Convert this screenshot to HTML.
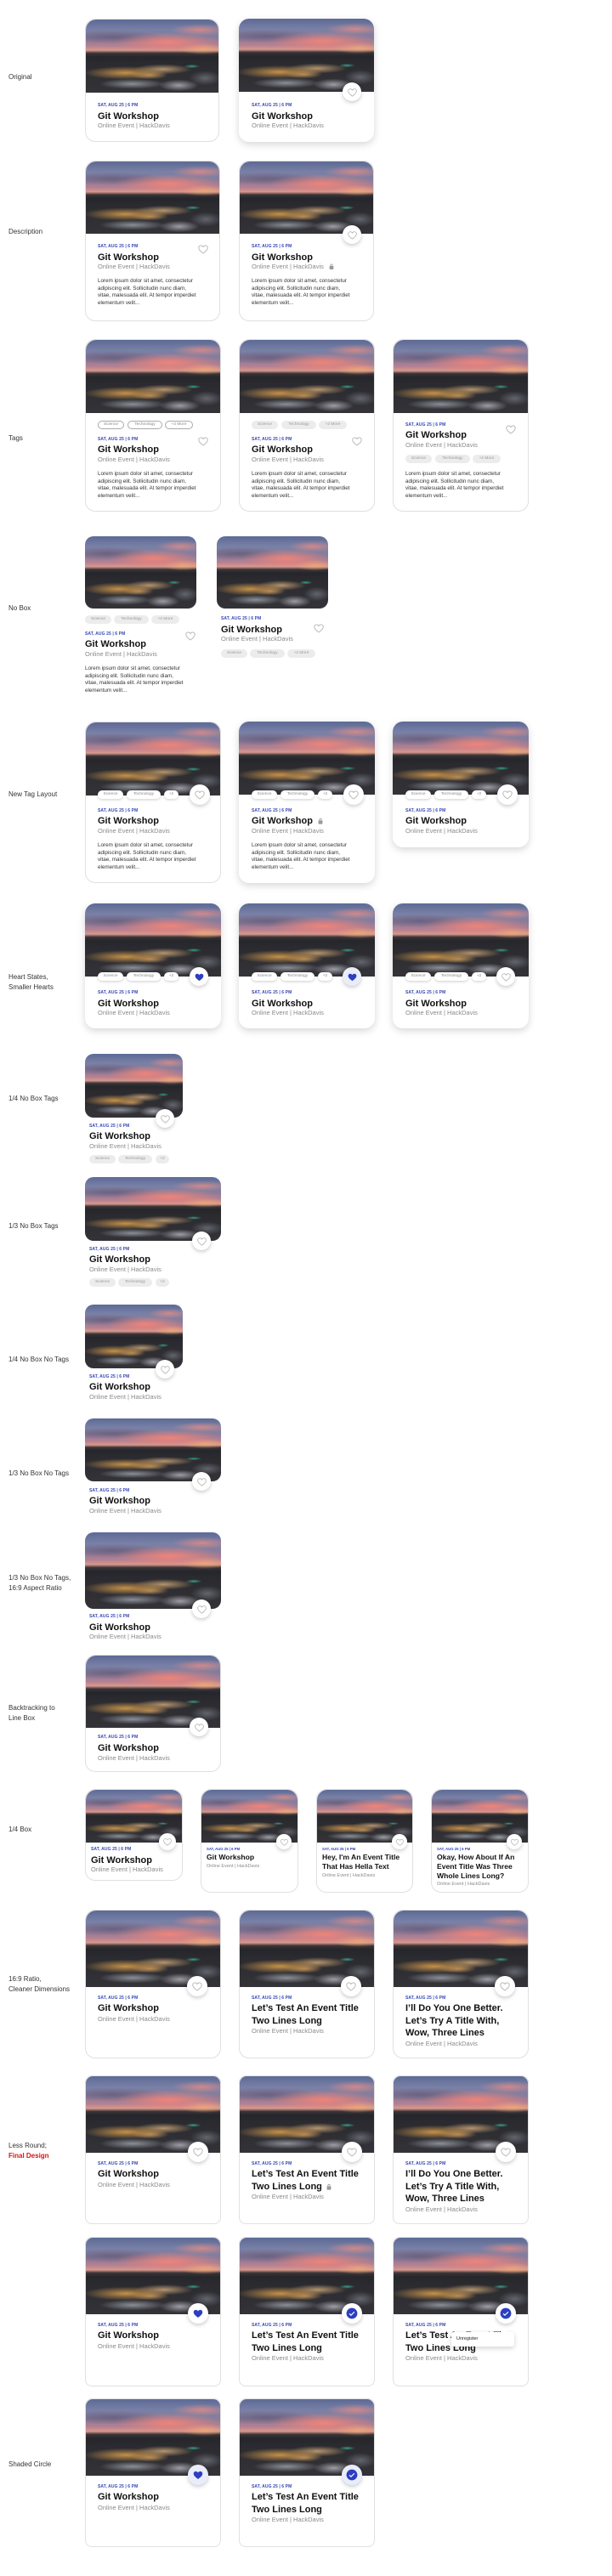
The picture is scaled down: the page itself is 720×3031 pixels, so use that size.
<!DOCTYPE html>
<html><head><meta charset="utf-8">
<style>
*{margin:0;padding:0;box-sizing:border-box}
body{width:720px;height:3031px;position:relative;background:#fff;font-family:"Liberation Sans",Arial,sans-serif;overflow:hidden}
.lb{position:absolute;left:10px;font-size:8px;color:#333;line-height:12px;white-space:nowrap}
.c{position:absolute;background:#fff;border-radius:12px}
.b{border:1px solid #e0e0e0}
.s{box-shadow:0 3px 9px rgba(0,0,0,.16)}
.lr{border-radius:8px}
.ph{position:absolute;overflow:hidden;background:
 radial-gradient(ellipse 6% 2.5% at 80% 64%,rgba(60,180,150,.85),rgba(60,180,150,0)),
 radial-gradient(ellipse 32% 9% at 30% 73%,rgba(205,150,75,.95),rgba(205,150,75,0)),
 radial-gradient(ellipse 22% 7% at 58% 68%,rgba(215,175,125,.8),rgba(215,175,125,0)),
 radial-gradient(ellipse 14% 6% at 48% 76%,rgba(210,160,100,.8),rgba(210,160,100,0)),
 radial-gradient(ellipse 25% 7% at 35% 88%,rgba(200,205,215,.6),rgba(200,205,215,0)),
 radial-gradient(ellipse 15% 8% at 70% 90%,rgba(215,215,225,.65),rgba(215,215,225,0)),
 radial-gradient(ellipse 12% 10% at 90% 80%,rgba(150,155,165,.5),rgba(150,155,165,0)),
 radial-gradient(ellipse 40% 13% at 62% 31%,rgba(242,132,120,.95),rgba(242,132,120,0)),
 radial-gradient(ellipse 22% 8% at 86% 14%,rgba(236,140,130,.75),rgba(236,140,130,0)),
 radial-gradient(ellipse 18% 8% at 88% 40%,rgba(240,170,120,.8),rgba(240,170,120,0)),
 radial-gradient(ellipse 40% 9% at 20% 24%,rgba(85,75,105,.55),rgba(85,75,105,0)),
 linear-gradient(180deg,#5d6a95 0%,#7880a6 14%,#8a7c9a 26%,#b48092 36%,#d8988c 42%,#3a3438 46%,#25262b 51%,#2a2a2f 60%,#333338 100%)}
.ph.tp{left:0;top:0;width:100%;border-radius:12px 12px 0 0}
.lr .ph.tp{border-radius:8px 8px 0 0}
.ph.nb{border-radius:10px}
.t{position:absolute;white-space:nowrap}
.d{font-size:5px;font-weight:bold;color:#3446b8;line-height:6px;letter-spacing:.1px}
.h{font-size:11px;font-weight:bold;color:#111;line-height:14.5px}
.g{font-size:7.5px;color:#8a8a8a;line-height:10px}
.p{font-size:6.3px;color:#333;line-height:8.5px}
.d2{font-size:4.3px;font-weight:bold;color:#3446b8;line-height:5px}
.h2{font-size:8.6px;font-weight:bold;color:#111;line-height:11px}
.g2{font-size:5.5px;color:#8a8a8a;line-height:7px}
.hc{position:absolute;border-radius:50%;background:#fff;box-shadow:0 2px 5px rgba(0,0,0,.2);display:flex;align-items:center;justify-content:center}
.hc.sh{background:#e9ecf9}
.hi{position:absolute}
.pl{position:absolute;height:10px;border-radius:5px;font-size:4.8px;line-height:10px;text-align:center;color:#888}
.pl.o{border:0.8px solid #aaa;line-height:8.5px}
.pl.f{background:#ececec;color:#999}
.pl.w{background:#fff;box-shadow:0 1px 3px rgba(0,0,0,.2)}
.tip{position:absolute;background:#fff;box-shadow:0 2px 6px rgba(0,0,0,.18);border-radius:3px;font-size:5.5px;color:#222;padding-left:6px;line-height:17px}
.tip:before{content:"";position:absolute;right:9px;top:-3px;width:6px;height:6px;background:#fff;transform:rotate(45deg)}
</style></head><body>

<svg width="0" height="0" style="position:absolute">
<defs>
<symbol id="ho" viewBox="0 0 24 24"><path d="M12 20.5C6 16.5 3 13.2 3 9.5 3 7 5 5 7.5 5c1.8 0 3.4 1 4.5 2.6C13.1 6 14.7 5 16.5 5 19 5 21 7 21 9.5c0 3.7-3 7-9 11z" fill="none" stroke="#b5b5b5" stroke-width="1.6"/></symbol>
<symbol id="hf" viewBox="0 0 24 24"><path d="M12 20.5C6 16.5 3 13.2 3 9.5 3 7 5 5 7.5 5c1.8 0 3.4 1 4.5 2.6C13.1 6 14.7 5 16.5 5 19 5 21 7 21 9.5c0 3.7-3 7-9 11z" fill="#2d3fbf"/></symbol>
<symbol id="ck" viewBox="0 0 24 24"><circle cx="12" cy="12" r="11" fill="#2d3fbf"/><path d="M7 12.5l3.3 3.3L17 9" fill="none" stroke="#fff" stroke-width="2"/></symbol>
<symbol id="lk" viewBox="0 0 10 12"><rect x="1" y="5" width="8" height="7" rx="1" fill="#999"/><path d="M3 5V3.5a2 2 0 0 1 4 0V5" fill="none" stroke="#999" stroke-width="1.3"/></symbol>
</defs></svg>

<!-- Labels -->
<div class="lb" style="top:85px">Original</div>
<div class="lb" style="top:267px">Description</div>
<div class="lb" style="top:510px">Tags</div>
<div class="lb" style="top:710px">No Box</div>
<div class="lb" style="top:929px">New Tag Layout</div>
<div class="lb" style="top:1144px">Heart States,<br>Smaller Hearts</div>
<div class="lb" style="top:1287px">1/4 No Box Tags</div>
<div class="lb" style="top:1437px">1/3 No Box Tags</div>
<div class="lb" style="top:1594px">1/4 No Box No Tags</div>
<div class="lb" style="top:1728px">1/3 No Box No Tags</div>
<div class="lb" style="top:1851px">1/3 No Box No Tags,<br>16:9 Aspect Ratio</div>
<div class="lb" style="top:2004px">Backtracking to<br>Line Box</div>
<div class="lb" style="top:2147px">1/4 Box</div>
<div class="lb" style="top:2323px">16:9 Ratio,<br>Cleaner Dimensions</div>
<div class="lb" style="top:2519px">Less Round;<br><b style="color:#e01010">Final Design</b></div>
<div class="lb" style="top:2894px">Shaded Circle</div>

<!-- Row 1 Original -->
<div class="c b" style="left:100px;top:22px;width:158px;height:145px"><div class="ph tp" style="height:86px"></div></div>
<div class="t d" style="left:115px;top:121px">SAT, AUG 25 | 6 PM</div>
<div class="t h" style="left:115px;top:130px">Git Workshop</div>
<div class="t g" style="left:115px;top:143px">Online Event | HackDavis</div>
<div class="c s" style="left:281px;top:22px;width:159px;height:145px"><div class="ph tp" style="height:86px"></div></div>
<div class="hc" style="left:403px;top:97px;width:22px;height:22px"><svg width="13" height="13"><use href="#ho"/></svg></div>
<div class="t d" style="left:296px;top:121px">SAT, AUG 25 | 6 PM</div>
<div class="t h" style="left:296px;top:130px">Git Workshop</div>
<div class="t g" style="left:296px;top:143px">Online Event | HackDavis</div>

<!-- Row 2 Description -->
<div class="c b" style="left:100px;top:189px;width:159px;height:189px"><div class="ph tp" style="height:85px"></div></div>
<svg class="hi" style="left:232px;top:286px" width="14" height="14"><use href="#ho"/></svg>
<div class="t d" style="left:115px;top:287px">SAT, AUG 25 | 6 PM</div>
<div class="t h" style="left:115px;top:296px">Git Workshop</div>
<div class="t g" style="left:115px;top:309px">Online Event | HackDavis</div>
<div class="t p" style="left:115px;top:327px">Lorem ipsum dolor sit amet, consectetur<br>adipiscing elit. Sollicitudin nunc diam,<br>vitae, malesuada elit. At tempor imperdiet<br>elementum velit...</div>
<div class="c b" style="left:281px;top:189px;width:159px;height:189px"><div class="ph tp" style="height:85px"></div></div>
<div class="hc" style="left:403px;top:265px;width:22px;height:22px"><svg width="13" height="13"><use href="#ho"/></svg></div>
<div class="t d" style="left:296px;top:287px">SAT, AUG 25 | 6 PM</div>
<div class="t h" style="left:296px;top:296px">Git Workshop</div>
<div class="t g" style="left:296px;top:309px">Online Event | HackDavis</div>
<svg class="hi" style="left:387px;top:310px" width="6" height="7"><use href="#lk"/></svg>
<div class="t p" style="left:296px;top:327px">Lorem ipsum dolor sit amet, consectetur<br>adipiscing elit. Sollicitudin nunc diam,<br>vitae, malesuada elit. At tempor imperdiet<br>elementum velit...</div>

<!-- Row 3 Tags -->
<div class="c b" style="left:100px;top:399px;width:160px;height:203px"><div class="ph tp" style="height:86px"></div></div>
<div class="pl o" style="left:115px;top:495px;width:31px">Science</div>
<div class="pl o" style="left:150px;top:495px;width:41px">Technology</div>
<div class="pl o" style="left:194px;top:495px;width:33px">+2 More</div>
<svg class="hi" style="left:232px;top:512px" width="14" height="14"><use href="#ho"/></svg>
<div class="t d" style="left:115px;top:514px">SAT, AUG 25 | 6 PM</div>
<div class="t h" style="left:115px;top:522px">Git Workshop</div>
<div class="t g" style="left:115px;top:536px">Online Event | HackDavis</div>
<div class="t p" style="left:115px;top:554px">Lorem ipsum dolor sit amet, consectetur<br>adipiscing elit. Sollicitudin nunc diam,<br>vitae, malesuada elit. At tempor imperdiet<br>elementum velit...</div>

<div class="c b" style="left:281px;top:399px;width:160px;height:203px"><div class="ph tp" style="height:86px"></div></div>
<div class="pl f" style="left:296px;top:495px;width:31px">Science</div>
<div class="pl f" style="left:331px;top:495px;width:41px">Technology</div>
<div class="pl f" style="left:375px;top:495px;width:33px">+2 More</div>
<svg class="hi" style="left:413px;top:512px" width="14" height="14"><use href="#ho"/></svg>
<div class="t d" style="left:296px;top:514px">SAT, AUG 25 | 6 PM</div>
<div class="t h" style="left:296px;top:522px">Git Workshop</div>
<div class="t g" style="left:296px;top:536px">Online Event | HackDavis</div>
<div class="t p" style="left:296px;top:554px">Lorem ipsum dolor sit amet, consectetur<br>adipiscing elit. Sollicitudin nunc diam,<br>vitae, malesuada elit. At tempor imperdiet<br>elementum velit...</div>

<div class="c b" style="left:462px;top:399px;width:160px;height:203px"><div class="ph tp" style="height:86px"></div></div>
<svg class="hi" style="left:594px;top:498px" width="14" height="14"><use href="#ho"/></svg>
<div class="t d" style="left:477px;top:497px">SAT, AUG 25 | 6 PM</div>
<div class="t h" style="left:477px;top:505px">Git Workshop</div>
<div class="t g" style="left:477px;top:519px">Online Event | HackDavis</div>
<div class="pl f" style="left:477px;top:535px;width:31px">Science</div>
<div class="pl f" style="left:512px;top:535px;width:41px">Technology</div>
<div class="pl f" style="left:556px;top:535px;width:33px">+2 More</div>
<div class="t p" style="left:477px;top:554px">Lorem ipsum dolor sit amet, consectetur<br>adipiscing elit. Sollicitudin nunc diam,<br>vitae, malesuada elit. At tempor imperdiet<br>elementum velit...</div>

<!-- Row 4 No Box -->
<div class="ph nb" style="left:100px;top:631px;width:131px;height:85px"></div>
<div class="pl f" style="left:100px;top:724px;width:31px">Science</div>
<div class="pl f" style="left:134px;top:724px;width:41px">Technology</div>
<div class="pl f" style="left:178px;top:724px;width:33px">+2 More</div>
<svg class="hi" style="left:217px;top:741px" width="14" height="14"><use href="#ho"/></svg>
<div class="t d" style="left:100px;top:743px">SAT, AUG 25 | 6 PM</div>
<div class="t h" style="left:100px;top:751px">Git Workshop</div>
<div class="t g" style="left:100px;top:765px">Online Event | HackDavis</div>
<div class="t p" style="left:100px;top:783px">Lorem ipsum dolor sit amet, consectetur<br>adipiscing elit. Sollicitudin nunc diam,<br>vitae, malesuada elit. At tempor imperdiet<br>elementum velit...</div>

<div class="ph nb" style="left:255px;top:631px;width:131px;height:85px"></div>
<svg class="hi" style="left:368px;top:732px" width="14" height="14"><use href="#ho"/></svg>
<div class="t d" style="left:260px;top:725px">SAT, AUG 25 | 6 PM</div>
<div class="t h" style="left:260px;top:734px">Git Workshop</div>
<div class="t g" style="left:260px;top:747px">Online Event | HackDavis</div>
<div class="pl f" style="left:260px;top:764px;width:31px">Science</div>
<div class="pl f" style="left:294px;top:764px;width:41px">Technology</div>
<div class="pl f" style="left:338px;top:764px;width:33px">+2 More</div>

<!-- Row 5 New Tag Layout -->
<div class="c b" style="left:100px;top:849px;width:160px;height:190px"><div class="ph tp" style="height:86px"></div></div>
<div class="pl w" style="left:115px;top:930px;width:30px">Science</div>
<div class="pl w" style="left:149px;top:930px;width:40px">Technology</div>
<div class="pl w" style="left:193px;top:930px;width:17px">+2</div>
<div class="hc" style="left:223px;top:923px;width:24px;height:24px"><svg width="14" height="14"><use href="#ho"/></svg></div>
<div class="t d" style="left:115px;top:951px">SAT, AUG 25 | 6 PM</div>
<div class="t h" style="left:115px;top:959px">Git Workshop</div>
<div class="t g" style="left:115px;top:973px">Online Event | HackDavis</div>
<div class="t p" style="left:115px;top:991px">Lorem ipsum dolor sit amet, consectetur<br>adipiscing elit. Sollicitudin nunc diam,<br>vitae, malesuada elit. At tempor imperdiet<br>elementum velit...</div>

<div class="c s" style="left:281px;top:849px;width:160px;height:190px"><div class="ph tp" style="height:86px"></div></div>
<div class="pl w" style="left:296px;top:930px;width:30px">Science</div>
<div class="pl w" style="left:330px;top:930px;width:40px">Technology</div>
<div class="pl w" style="left:374px;top:930px;width:17px">+2</div>
<div class="hc" style="left:404px;top:923px;width:24px;height:24px"><svg width="14" height="14"><use href="#ho"/></svg></div>
<div class="t d" style="left:296px;top:951px">SAT, AUG 25 | 6 PM</div>
<div class="t h" style="left:296px;top:959px">Git Workshop</div>
<svg class="hi" style="left:374px;top:962px" width="6" height="8"><use href="#lk"/></svg>
<div class="t g" style="left:296px;top:973px">Online Event | HackDavis</div>
<div class="t p" style="left:296px;top:991px">Lorem ipsum dolor sit amet, consectetur<br>adipiscing elit. Sollicitudin nunc diam,<br>vitae, malesuada elit. At tempor imperdiet<br>elementum velit...</div>

<div class="c s" style="left:462px;top:849px;width:160px;height:148px"><div class="ph tp" style="height:86px"></div></div>
<div class="pl w" style="left:477px;top:930px;width:30px">Science</div>
<div class="pl w" style="left:511px;top:930px;width:40px">Technology</div>
<div class="pl w" style="left:555px;top:930px;width:17px">+2</div>
<div class="hc" style="left:585px;top:923px;width:24px;height:24px"><svg width="14" height="14"><use href="#ho"/></svg></div>
<div class="t d" style="left:477px;top:951px">SAT, AUG 25 | 6 PM</div>
<div class="t h" style="left:477px;top:959px">Git Workshop</div>
<div class="t g" style="left:477px;top:973px">Online Event | HackDavis</div>

<!-- Row 6 Heart States -->
<div class="c s" style="left:100px;top:1063px;width:160px;height:147px"><div class="ph tp" style="height:86px"></div></div>
<div class="pl w" style="left:115px;top:1144px;width:30px">Science</div>
<div class="pl w" style="left:149px;top:1144px;width:40px">Technology</div>
<div class="pl w" style="left:193px;top:1144px;width:17px">+2</div>
<div class="hc" style="left:223px;top:1138px;width:22px;height:22px"><svg width="13" height="13"><use href="#hf"/></svg></div>
<div class="t d" style="left:115px;top:1165px">SAT, AUG 25 | 6 PM</div>
<div class="t h" style="left:115px;top:1174px">Git Workshop</div>
<div class="t g" style="left:115px;top:1187px">Online Event | HackDavis</div>

<div class="c s" style="left:281px;top:1063px;width:160px;height:147px"><div class="ph tp" style="height:86px"></div></div>
<div class="pl w" style="left:296px;top:1144px;width:30px">Science</div>
<div class="pl w" style="left:330px;top:1144px;width:40px">Technology</div>
<div class="pl w" style="left:374px;top:1144px;width:17px">+2</div>
<div class="hc sh" style="left:403px;top:1138px;width:22px;height:22px"><svg width="13" height="13"><use href="#hf"/></svg></div>
<div class="t d" style="left:296px;top:1165px">SAT, AUG 25 | 6 PM</div>
<div class="t h" style="left:296px;top:1174px">Git Workshop</div>
<div class="t g" style="left:296px;top:1187px">Online Event | HackDavis</div>

<div class="c s" style="left:462px;top:1063px;width:160px;height:147px"><div class="ph tp" style="height:86px"></div></div>
<div class="pl w" style="left:477px;top:1144px;width:30px">Science</div>
<div class="pl w" style="left:511px;top:1144px;width:40px">Technology</div>
<div class="pl w" style="left:555px;top:1144px;width:17px">+2</div>
<div class="hc" style="left:584px;top:1138px;width:22px;height:22px"><svg width="13" height="13"><use href="#ho"/></svg></div>
<div class="t d" style="left:477px;top:1165px">SAT, AUG 25 | 6 PM</div>
<div class="t h" style="left:477px;top:1174px">Git Workshop</div>
<div class="t g" style="left:477px;top:1187px">Online Event | HackDavis</div>

<!-- 1/4 No Box Tags -->
<div class="ph nb" style="left:100px;top:1240px;width:115px;height:75px"></div>
<div class="hc" style="left:183px;top:1305px;width:22px;height:22px"><svg width="13" height="13"><use href="#ho"/></svg></div>
<div class="t d" style="left:105px;top:1322px">SAT, AUG 25 | 6 PM</div>
<div class="t h" style="left:105px;top:1330px">Git Workshop</div>
<div class="t g" style="left:105px;top:1344px">Online Event | HackDavis</div>
<div class="pl f" style="left:105px;top:1359px;width:31px">Science</div>
<div class="pl f" style="left:139px;top:1359px;width:40px">Technology</div>
<div class="pl f" style="left:183px;top:1359px;width:16px">+2</div>

<!-- 1/3 No Box Tags -->
<div class="ph nb" style="left:100px;top:1385px;width:160px;height:75px"></div>
<div class="hc" style="left:226px;top:1449px;width:22px;height:22px"><svg width="13" height="13"><use href="#ho"/></svg></div>
<div class="t d" style="left:105px;top:1467px">SAT, AUG 25 | 6 PM</div>
<div class="t h" style="left:105px;top:1475px">Git Workshop</div>
<div class="t g" style="left:105px;top:1489px">Online Event | HackDavis</div>
<div class="pl f" style="left:105px;top:1504px;width:31px">Science</div>
<div class="pl f" style="left:139px;top:1504px;width:40px">Technology</div>
<div class="pl f" style="left:183px;top:1504px;width:16px">+2</div>

<!-- 1/4 No Box No Tags -->
<div class="ph nb" style="left:100px;top:1535px;width:115px;height:75px"></div>
<div class="hc" style="left:183px;top:1600px;width:22px;height:22px"><svg width="13" height="13"><use href="#ho"/></svg></div>
<div class="t d" style="left:105px;top:1617px">SAT, AUG 25 | 6 PM</div>
<div class="t h" style="left:105px;top:1625px">Git Workshop</div>
<div class="t g" style="left:105px;top:1639px">Online Event | HackDavis</div>

<!-- 1/3 No Box No Tags -->
<div class="ph nb" style="left:100px;top:1669px;width:160px;height:74px"></div>
<div class="hc" style="left:226px;top:1732px;width:22px;height:22px"><svg width="13" height="13"><use href="#ho"/></svg></div>
<div class="t d" style="left:105px;top:1751px">SAT, AUG 25 | 6 PM</div>
<div class="t h" style="left:105px;top:1759px">Git Workshop</div>
<div class="t g" style="left:105px;top:1773px">Online Event | HackDavis</div>

<!-- 16:9 -->
<div class="ph nb" style="left:100px;top:1803px;width:160px;height:90px"></div>
<div class="hc" style="left:226px;top:1882px;width:22px;height:22px"><svg width="13" height="13"><use href="#ho"/></svg></div>
<div class="t d" style="left:105px;top:1899px">SAT, AUG 25 | 6 PM</div>
<div class="t h" style="left:105px;top:1908px">Git Workshop</div>
<div class="t g" style="left:105px;top:1921px">Online Event | HackDavis</div>

<!-- Backtracking -->
<div class="c b" style="left:100px;top:1947px;width:160px;height:138px"><div class="ph tp" style="height:85px"></div></div>
<div class="hc" style="left:223px;top:2021px;width:22px;height:22px"><svg width="13" height="13"><use href="#ho"/></svg></div>
<div class="t d" style="left:115px;top:2041px">SAT, AUG 25 | 6 PM</div>
<div class="t h" style="left:115px;top:2050px">Git Workshop</div>
<div class="t g" style="left:115px;top:2064px">Online Event | HackDavis</div>

<!-- 1/4 Box -->
<div class="c b" style="left:100px;top:2105px;width:115px;height:108px"><div class="ph tp" style="height:62px"></div></div>
<div class="hc" style="left:187px;top:2157px;width:20px;height:20px"><svg width="12" height="12"><use href="#ho"/></svg></div>
<div class="t d" style="left:107px;top:2173px">SAT, AUG 25 | 6 PM</div>
<div class="t h" style="left:107px;top:2182px">Git Workshop</div>
<div class="t g" style="left:107px;top:2195px">Online Event | HackDavis</div>

<div class="c b" style="left:236px;top:2105px;width:115px;height:122px"><div class="ph tp" style="height:62px"></div></div>
<div class="hc" style="left:325px;top:2158px;width:18px;height:18px"><svg width="11" height="11"><use href="#ho"/></svg></div>
<div class="t d2" style="left:243px;top:2173px">SAT, AUG 25 | 6 PM</div>
<div class="t h2" style="left:243px;top:2180px">Git Workshop</div>
<div class="t g2" style="left:243px;top:2193px">Online Event | HackDavis</div>

<div class="c b" style="left:372px;top:2105px;width:114px;height:122px"><div class="ph tp" style="height:62px"></div></div>
<div class="hc" style="left:461px;top:2158px;width:18px;height:18px"><svg width="11" height="11"><use href="#ho"/></svg></div>
<div class="t d2" style="left:379px;top:2173px">SAT, AUG 25 | 6 PM</div>
<div class="t h2" style="left:379px;top:2180px">Hey, I'm An Event Title<br>That Has Hella Text</div>
<div class="t g2" style="left:379px;top:2204px">Online Event | HackDavis</div>

<div class="c b" style="left:507px;top:2105px;width:115px;height:122px"><div class="ph tp" style="height:62px"></div></div>
<div class="hc" style="left:596px;top:2158px;width:18px;height:18px"><svg width="11" height="11"><use href="#ho"/></svg></div>
<div class="t d2" style="left:514px;top:2173px">SAT, AUG 25 | 6 PM</div>
<div class="t h2" style="left:514px;top:2180px">Okay, How About If An<br>Event Title Was Three<br>Whole Lines Long?</div>
<div class="t g2" style="left:514px;top:2214px">Online Event | HackDavis</div>

<!-- 16:9 Cleaner -->
<div class="c b" style="left:100px;top:2247px;width:160px;height:175px"><div class="ph tp" style="height:90px"></div></div>
<div class="hc" style="left:220px;top:2325px;width:24px;height:24px"><svg width="14" height="14"><use href="#ho"/></svg></div>
<div class="t d" style="left:115px;top:2348px">SAT, AUG 25 | 6 PM</div>
<div class="t h" style="left:115px;top:2356px">Git Workshop</div>
<div class="t g" style="left:115px;top:2371px">Online Event | HackDavis</div>

<div class="c b" style="left:281px;top:2247px;width:160px;height:175px"><div class="ph tp" style="height:90px"></div></div>
<div class="hc" style="left:401px;top:2325px;width:24px;height:24px"><svg width="14" height="14"><use href="#ho"/></svg></div>
<div class="t d" style="left:296px;top:2348px">SAT, AUG 25 | 6 PM</div>
<div class="t h" style="left:296px;top:2356px">Let’s Test An Event Title<br>Two Lines Long</div>
<div class="t g" style="left:296px;top:2385px">Online Event | HackDavis</div>

<div class="c b" style="left:462px;top:2247px;width:160px;height:175px"><div class="ph tp" style="height:90px"></div></div>
<div class="hc" style="left:582px;top:2325px;width:24px;height:24px"><svg width="14" height="14"><use href="#ho"/></svg></div>
<div class="t d" style="left:477px;top:2348px">SAT, AUG 25 | 6 PM</div>
<div class="t h" style="left:477px;top:2356px">I’ll Do You One Better.<br>Let’s Try A Title With,<br>Wow, Three Lines</div>
<div class="t g" style="left:477px;top:2400px">Online Event | HackDavis</div>

<!-- Less Round -->
<div class="c b lr" style="left:100px;top:2442px;width:160px;height:175px"><div class="ph tp" style="height:90px"></div></div>
<div class="hc" style="left:221px;top:2520px;width:24px;height:24px"><svg width="14" height="14"><use href="#ho"/></svg></div>
<div class="t d" style="left:115px;top:2543px">SAT, AUG 25 | 6 PM</div>
<div class="t h" style="left:115px;top:2551px">Git Workshop</div>
<div class="t g" style="left:115px;top:2566px">Online Event | HackDavis</div>

<div class="c b lr" style="left:281px;top:2442px;width:160px;height:175px"><div class="ph tp" style="height:90px"></div></div>
<div class="hc" style="left:402px;top:2520px;width:24px;height:24px"><svg width="14" height="14"><use href="#ho"/></svg></div>
<div class="t d" style="left:296px;top:2543px">SAT, AUG 25 | 6 PM</div>
<div class="t h" style="left:296px;top:2551px">Let’s Test An Event Title<br>Two Lines Long</div>
<svg class="hi" style="left:384px;top:2569px" width="6" height="8"><use href="#lk"/></svg>
<div class="t g" style="left:296px;top:2580px">Online Event | HackDavis</div>

<div class="c b lr" style="left:462px;top:2442px;width:160px;height:175px"><div class="ph tp" style="height:90px"></div></div>
<div class="hc" style="left:583px;top:2520px;width:24px;height:24px"><svg width="14" height="14"><use href="#ho"/></svg></div>
<div class="t d" style="left:477px;top:2543px">SAT, AUG 25 | 6 PM</div>
<div class="t h" style="left:477px;top:2551px">I’ll Do You One Better.<br>Let’s Try A Title With,<br>Wow, Three Lines</div>
<div class="t g" style="left:477px;top:2595px">Online Event | HackDavis</div>

<!-- Registered states -->
<div class="c b lr" style="left:100px;top:2632px;width:160px;height:176px"><div class="ph tp" style="height:90px"></div></div>
<div class="hc" style="left:221px;top:2710px;width:24px;height:24px"><svg width="14" height="14"><use href="#hf"/></svg></div>
<div class="t d" style="left:115px;top:2733px">SAT, AUG 25 | 6 PM</div>
<div class="t h" style="left:115px;top:2741px">Git Workshop</div>
<div class="t g" style="left:115px;top:2756px">Online Event | HackDavis</div>

<div class="c b lr" style="left:281px;top:2632px;width:160px;height:176px"><div class="ph tp" style="height:90px"></div></div>
<div class="hc" style="left:402px;top:2710px;width:24px;height:24px"><svg width="14" height="14"><use href="#ck"/></svg></div>
<div class="t d" style="left:296px;top:2733px">SAT, AUG 25 | 6 PM</div>
<div class="t h" style="left:296px;top:2741px">Let’s Test An Event Title<br>Two Lines Long</div>
<div class="t g" style="left:296px;top:2770px">Online Event | HackDavis</div>

<div class="c b lr" style="left:462px;top:2632px;width:160px;height:176px"><div class="ph tp" style="height:90px"></div></div>
<div class="hc" style="left:583px;top:2710px;width:24px;height:24px"><svg width="14" height="14"><use href="#ck"/></svg></div>
<div class="t d" style="left:477px;top:2733px">SAT, AUG 25 | 6 PM</div>
<div class="t h" style="left:477px;top:2741px">Let’s Test An Event Title<br>Two Lines Long</div>
<div class="t g" style="left:477px;top:2770px">Online Event | HackDavis</div>
<div class="tip" style="left:531px;top:2744px;width:74px;height:17px">Unregister</div>

<!-- Shaded Circle -->
<div class="c b lr" style="left:100px;top:2822px;width:160px;height:175px"><div class="ph tp" style="height:90px"></div></div>
<div class="hc sh" style="left:221px;top:2900px;width:24px;height:24px"><svg width="14" height="14"><use href="#hf"/></svg></div>
<div class="t d" style="left:115px;top:2923px">SAT, AUG 25 | 6 PM</div>
<div class="t h" style="left:115px;top:2931px">Git Workshop</div>
<div class="t g" style="left:115px;top:2946px">Online Event | HackDavis</div>

<div class="c b lr" style="left:281px;top:2822px;width:160px;height:175px"><div class="ph tp" style="height:90px"></div></div>
<div class="hc sh" style="left:402px;top:2900px;width:24px;height:24px"><svg width="14" height="14"><use href="#ck"/></svg></div>
<div class="t d" style="left:296px;top:2923px">SAT, AUG 25 | 6 PM</div>
<div class="t h" style="left:296px;top:2931px">Let’s Test An Event Title<br>Two Lines Long</div>
<div class="t g" style="left:296px;top:2960px">Online Event | HackDavis</div>

</body></html>
